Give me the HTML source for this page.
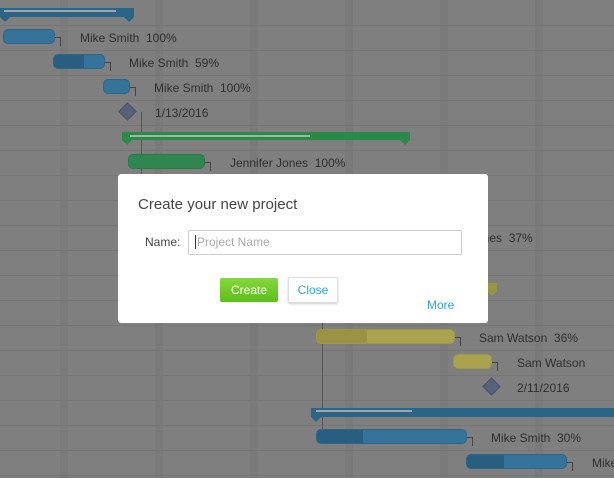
<!DOCTYPE html><html style="background:#7f7f7f"><head><style>
html,body{margin:0;width:614px;height:478px;overflow:hidden;background:#7f7f7f}
body{font-family:"Liberation Sans",sans-serif;position:relative}
#w{position:absolute;left:0;top:0;width:614px;height:478px;overflow:hidden;background:#7f7f7f}
.a{position:absolute}
.row{position:absolute;left:0;width:614px;height:1px;background:#767676}
.vs{position:absolute;top:0;height:478px;background:#7a7a7a}
.t{position:absolute;font-size:12px;color:#2e2e2e;line-height:14px;white-space:nowrap}
.b{position:absolute;height:15px;border-radius:5px;overflow:hidden;box-sizing:border-box}
.blue{background:#35739a;border:1px solid #2d6788}
.blue i{display:block;height:100%;background:#285f80}
.grn{background:#2f8650;border:1px solid #2a7a48}
.yel{background:#a9a24e;border:1px solid #9c954a}
.yel i{display:block;height:100%;background:#9a9442}
.dia{position:absolute;width:11px;height:11px;background:#55627a;border:1px solid #48546a;transform:rotate(45deg)}
.c{position:absolute;width:5px;height:8px;border-top:1px solid #444;border-right:1px solid #444}
</style></head><body><div id="w">
<div class="vs" style="left:60px;width:8px"></div><div class="vs" style="left:155px;width:8px"></div><div class="vs" style="left:250px;width:8px"></div><div class="vs" style="left:345px;width:8px"></div><div class="vs" style="left:440px;width:8px"></div><div class="vs" style="left:535px;width:8px"></div>
<div class="row" style="top:25px"></div><div class="row" style="top:50px"></div><div class="row" style="top:75px"></div><div class="row" style="top:100px"></div><div class="row" style="top:125px"></div><div class="row" style="top:150px"></div><div class="row" style="top:175px"></div><div class="row" style="top:200px"></div><div class="row" style="top:225px"></div><div class="row" style="top:250px"></div><div class="row" style="top:275px"></div><div class="row" style="top:300px"></div><div class="row" style="top:325px"></div><div class="row" style="top:350px"></div><div class="row" style="top:375px"></div><div class="row" style="top:400px"></div><div class="row" style="top:425px"></div><div class="row" style="top:450px"></div><div class="row" style="top:475px"></div>
<svg class="a" style="left:0;top:7px" width="136" height="16"><path d="M0 1H134V10L129 15L124 10H10L5 15L0 10Z" fill="#2a6587"/><rect x="4" y="3" width="112" height="2" fill="#9aa7af"/></svg>
<div class="b blue" style="left:3px;top:29px;width:52px"></div><div class="c" style="left:55px;top:37px"></div><div class="t" style="left:80px;top:31px">Mike Smith&nbsp;&nbsp;100%</div>
<div class="b blue" style="left:53px;top:54px;width:52px"><i style="width:30px"></i></div><div class="c" style="left:105px;top:62px"></div><div class="t" style="left:129px;top:56px">Mike Smith&nbsp;&nbsp;59%</div>
<div class="b blue" style="left:103px;top:79px;width:27px"></div><div class="c" style="left:130px;top:87px"></div><div class="t" style="left:154px;top:81px">Mike Smith&nbsp;&nbsp;100%</div>
<div class="dia" style="left:121px;top:105px"></div><div class="t" style="left:155px;top:106px">1/13/2016</div>
<div class="a" style="left:141px;top:112px;width:1px;height:200px;background:#555"></div>
<svg class="a" style="left:122px;top:132px" width="290" height="16"><path d="M0 0H288V8L283 13L278 8H10L5 13L0 8Z" fill="#2a8a4a"/><rect x="8" y="3" width="180" height="2" fill="#9db8a5"/></svg>
<div class="b grn" style="left:128px;top:154px;width:77px"></div><div class="c" style="left:205px;top:162px"></div><div class="t" style="left:230px;top:156px">Jennifer Jones&nbsp;&nbsp;100%</div>
<div class="t" style="left:470px;top:231px">Jones&nbsp;&nbsp;37%</div>
<svg class="a" style="left:480px;top:283px" width="20" height="14"><path d="M0 0H17V8L12 13L7 8H0Z" fill="#9a9440"/></svg>
<div class="a" style="left:322px;top:300px;width:1px;height:130px;background:#555"></div>
<div class="b yel" style="left:316px;top:329px;width:139px"><i style="width:50px"></i></div><div class="c" style="left:455px;top:337px"></div><div class="t" style="left:479px;top:331px">Sam Watson&nbsp;&nbsp;36%</div>
<div class="b yel" style="left:453px;top:354px;width:39px"></div><div class="c" style="left:492px;top:362px"></div><div class="t" style="left:517px;top:356px">Sam Watson</div>
<div class="dia" style="left:485px;top:380px"></div><div class="t" style="left:517px;top:381px">2/11/2016</div>
<svg class="a" style="left:311px;top:407px" width="303" height="16"><path d="M0 1H303V10H10L5 15L0 10Z" fill="#2a6587"/><rect x="5" y="3" width="96" height="2" fill="#9aa7af"/></svg>
<div class="b blue" style="left:316px;top:429px;width:151px"><i style="width:46px"></i></div><div class="c" style="left:467px;top:437px"></div><div class="t" style="left:491px;top:431px">Mike Smith&nbsp;&nbsp;30%</div>
<div class="b blue" style="left:466px;top:454px;width:101px"><i style="width:37px"></i></div><div class="c" style="left:567px;top:462px"></div><div class="t" style="left:592px;top:456px">Mike</div>
<div class="a" style="left:118px;top:174px;width:370px;height:149px;background:#fff;border-radius:3px">
<div class="a" style="left:20px;top:22px;font-size:15px;color:#444">Create your new project</div>
<div class="a" style="left:27px;top:61px;font-size:12px;color:#444">Name:</div>
<div class="a" style="left:70px;top:56px;width:266px;height:23px;border:1px solid #ccc;border-radius:2px;font-size:12px;color:#aaa;line-height:23px;padding-left:6px"><span style="border-left:1px solid #333;padding-left:1px">Project Name</span></div>
<div class="a" style="left:102px;top:104px;width:58px;height:24px;background:linear-gradient(#84d93a,#5cbf1a);border-radius:2px;color:#fff;font-size:12px;line-height:24px;text-align:center">Create</div>
<div class="a" style="left:170px;top:103px;width:48px;height:24px;border:1px solid #ddd;border-radius:2px;box-shadow:0 1px 2px #ccc;color:#2aa3e6;font-size:12px;line-height:24px;text-align:center">Close</div>
<div class="a" style="left:309px;top:124px;font-size:12px;color:#2aa3e6">More</div>
</div>
</div></body></html>
